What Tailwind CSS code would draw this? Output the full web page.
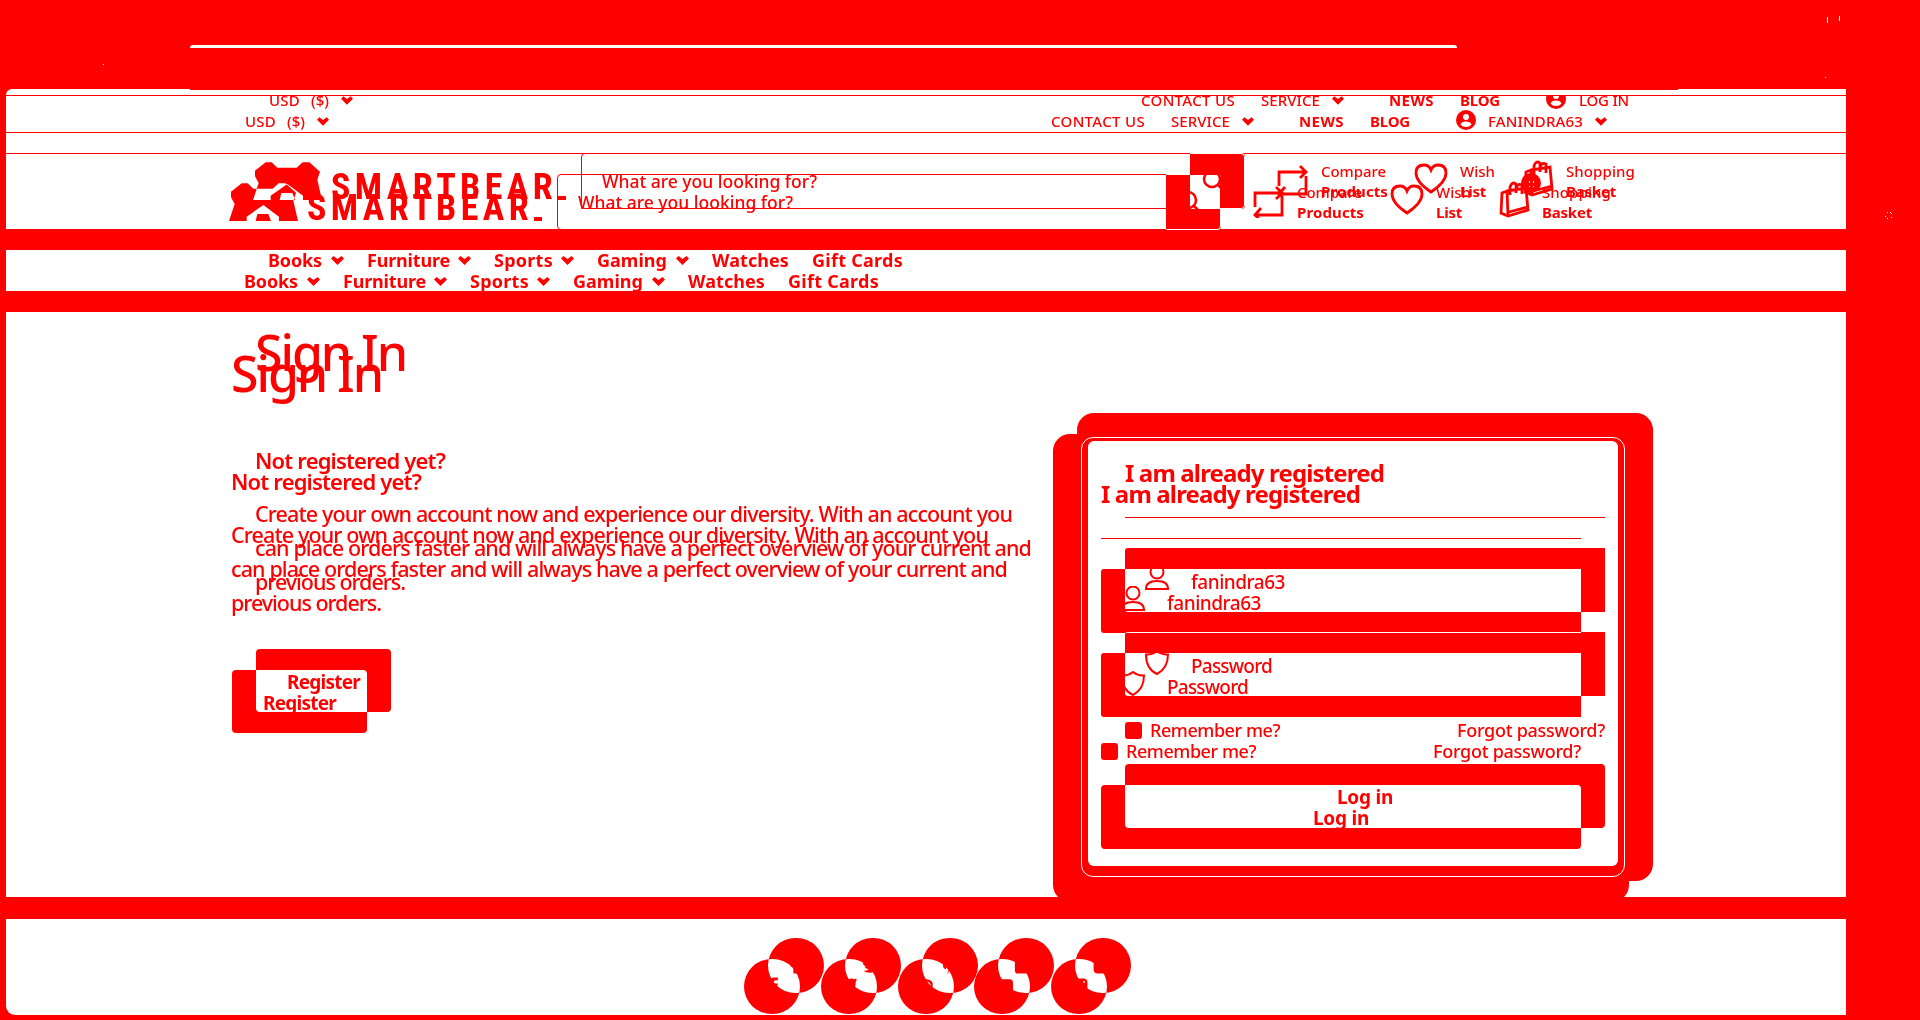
<!DOCTYPE html>
<html lang="en">
<head>
<meta charset="utf-8">
<title>SmartBear - Sign In</title>
<script src="https://cdn.jsdelivr.net/npm/@tailwindcss/browser@4"></script>
</head>
<body class="bg-[#f00]">
<div class="relative isolate h-[1020px] w-[1920px] overflow-hidden bg-[#f00] font-['Noto_Sans','Open_Sans',sans-serif] text-[#f00]">
  <!-- Window frame and page bands -->
  <div class="flex h-full flex-col">
    <div class="mt-[45px] ml-[190px] h-[3px] w-[1267px] rounded-t-[3px] bg-white"></div>
    <div class="mt-[41px] ml-[6px] h-[6px] w-[1840px] rounded-tl-[6px] bg-white"><div class="ml-[184px] h-px w-[1488px] bg-[#f00]"></div></div>
    <div class="mt-px ml-[6px] h-[36px] w-[1840px] bg-white"></div>
    <div class="mt-px ml-[6px] h-[20px] w-[1840px] bg-white"></div>
    <div class="mt-px ml-[6px] h-[75px] w-[1840px] bg-white"></div>
    <div class="mt-[21px] ml-[6px] h-[41px] w-[1840px] bg-white"></div>
    <div class="mt-[21px] ml-[6px] h-[585px] w-[1840px] bg-white"></div>
    <div class="mt-[22px] ml-[6px] h-[96px] w-[1840px] rounded-bl-[9px] bg-white"></div>
  </div>
  <!-- Specks in the title bar and scrollbar -->
  <svg class="absolute inset-0" width="1920" height="1020" fill="#fff"><path d="M103 64h1v1h-1zM1827 17h1v6h-1zM1839 16h1v5h-1zM1825 77h1v1h-1z"/><path d="M1887 212h1v1h-1zM1890 212h1v1h-1zM1885 216h1v1h-1zM1887 218h1v1h-1zM1891 213h1v1h-1zM1891 217h1v1h-1z"/></svg>
  <!-- Login card -->
  <div class="absolute top-[434px] left-[1053px] h-[468px] w-[576px] rounded-[17px] bg-[#f00]"></div>
  <div class="absolute top-[413px] left-[1077px] h-[468px] w-[576px] rounded-[17px] bg-[#f00]"></div>
  <div class="absolute top-[437px] left-[1081px] h-[440px] w-[544px] rounded-[12px] border border-white"></div>
  <div class="absolute top-[441px] left-[1088px] h-[425px] w-[530px] rounded-[6px] bg-white"></div>

  <div class="absolute top-[96px] left-0 h-[924px] w-[1920px] overflow-hidden"><div id="first" class="w-[1920px]"></div></div>
  <div class="absolute top-[96px] left-0 h-[924px] w-[1920px] overflow-hidden"><div id="second" class="-mt-[21px] ml-[24px] w-[1920px]"></div></div>
</div>

<script>
const t = (s, w, c = '') => `<span class="relative z-10 block shrink-0 whitespace-nowrap ${c}" data-w="${w}" style="width:${w}px">${s}</span>`;
const fill = c => `<span class="absolute inset-0 bg-[#0ff] mix-blend-difference ${c}"></span>`;
const chev = (c, s = 13) => `<svg class="relative z-10 shrink-0 ${c}" width="${s}" height="9" viewBox="0 0 13 9" fill="#f00"><path d="M0 2.5 2.5 0 6.5 3 10.5 0 13 2.5 6.5 9z"/></svg>`;
const glyphs = [
  '<path d="M30 37V29h4l1-5h-5v-2q0-2 3-2h2v-3h-4q-6 0-6 5v2h-3v5h3v8z"/>',
  '<path d="M17 34q4 0 6-2-4-1-5-3h2q-4-2-4-5l2 1q-3-3-1-6 4 4 9 4 0-5 5-5 2 0 3 1l3-1-1 2 2-1-2 3q0 14-12 14-4 0-7-2z"/>',
  '<path d="M25 37 27 29q-2-5 1-5 3 0 1 6 0 2 3 1 3-3 1-7-2-3-6-2-5 1-4 6l1 2-1 2q-4-2-3-6 2-7 9-7 8 1 7 7-1 7-7 7l-2-1-1 5z"/>',
  '<rect x="15" y="19" width="26" height="18" rx="4"/>',
  '<path fill-rule="evenodd" d="M22 18h11q5 0 5 5v9q0 5-5 5H22q-5 0-5-5v-9q0-5 5-5zm12 3a1 1 0 1 0 .1 0z"/>'
];
function page(login) {
  return `
  <div class="flex h-[50px] items-center text-[15px] leading-5 font-medium">
    ${t('USD', 31, 'ml-[245px]')}${t('($)', 18, 'ml-[11px]')}${chev('ml-[12px]', 12)}
    ${t('CONTACT US', 94, login ? 'ml-[788px]' : 'ml-[722px]')}${t('SERVICE', 59, 'ml-[26px]')}${chev('ml-[12px]', 12)}
    ${t('NEWS', 45, 'ml-[45px] font-bold')}${t('BLOG', 40, 'ml-[26px] font-bold')}
    <svg class="relative z-10 ml-[46px] -mt-0.5 shrink-0" width="20" height="20" viewBox="0 0 20 20"><circle cx="10" cy="10" r="10" fill="#f00"/><circle cx="10" cy="7" r="3" fill="#fff"/><path d="M4.5 14.5q1-3 5.500-3t5.500 3q-2 2.500-5.500 2.500t-5.500-2.500z" fill="#fff"/></svg>
    ${login ? t('LOG IN', 50, 'ml-[13px]') : t('FANINDRA63', 95, 'ml-[12px]') + chev('ml-[12px]', 12)}
  </div>
  <div class="mt-[28px] flex h-[55px] items-center">
    <svg class="ml-[229px] shrink-0 mix-blend-difference" width="70" height="38" viewBox="87 309 210 114" fill="#0ff"><path d="M87 423 104 372 93 352V335L125 310H143L160 326H218L236 310H256L288 338 280 362 294 423H237V410L190 375 140 410V423zM167 423 172 402H205L213 423z"/></svg>
    ${t('SMARTBEAR', 226, "ml-[8px] mt-[13px] text-[36px] leading-[40px] font-bold font-['Roboto'] font-stretch-condensed")}
    <span class="relative z-10 mt-[35px] ml-px h-[4px] w-[8px] bg-[#f00]"></span>
    <div class="relative ml-[15px] flex h-[56px] w-[664px] shrink-0 items-center self-start rounded-[4px] border border-[#f00]">
      ${t('What are you looking for?', 215, 'ml-[20px] mt-px text-[17.5px] font-medium')}
      <div class="relative -mr-px ml-auto h-[56px] w-[55px]">${fill('rounded-r-[4px]')}
        <svg class="absolute inset-0 z-10" width="55" height="55" fill="none" stroke="#f00" stroke-width="2.500"><circle cx="22" cy="26" r="8"/><path d="m28 32 7 7"/></svg>
      </div>
    </div>
    <svg class="relative z-10 ml-[32px] shrink-0" width="32" height="32" fill="none" stroke="#f00" stroke-width="2.800"><path d="M2 21V7H28M23 1l6 6-6 6M29 11v18H3M8 22 2 29l6 6"/></svg>
    <div class="ml-[12px] w-[67px] text-[15px] leading-5 font-medium">${t('Compare', 65)}${t('Products', 67, 'font-bold')}</div>
    <svg class="relative z-10 ml-[26px] -mt-1 shrink-0" width="34" height="31" fill="none" stroke="#f00" stroke-width="2.800"><path d="M17 29Q2 19 2 10 2 2 10 2 15 2 17 7 19 2 24 2 32 2 32 10 32 19 17 29z"/></svg>
    <div class="ml-[12px] w-[35px] text-[15px] leading-5 font-medium">${t('Wish', 35)}${t('List', 26, 'font-bold')}</div>
    <div class="relative z-10 ml-[29px] w-[30px] shrink-0"><svg class="-mt-1 overflow-visible" width="30" height="37" fill="none" stroke="#f00" stroke-width="2.800"><path d="M7 10 26 7 28 29 8 35 1 32 2 12zM7 10 8 35M10 14V6q2-6 6-3v9M16 8q1-6 6-4v9M9 31 28 26"/></svg>
      ${login ? '' : '<svg class="absolute -top-3 left-[21px]" width="20" height="20"><circle cx="10" cy="10" r="10" fill="#f00"/><path d="M8 8h1v2H8zM12 8h1v2h-1zM8 13h1v1H8zM12 13h1v1h-1z" fill="#fff"/></svg>'}</div>
    <div class="ml-[12px] w-[69px] text-[15px] leading-5 font-medium">${t('Shopping', 69)}${t('Basket', 50, 'font-bold')}</div>
  </div>
  <div class="mt-[32px] flex h-[41px] items-center text-[18px] font-bold">
    ${t('Books', 54, 'ml-[244px]')}${chev('ml-[9px]')}
    ${t('Furniture', 83, 'ml-[23px]')}${chev('ml-[8px]')}
    ${t('Sports', 59, 'ml-[23px]')}${chev('ml-[8px]')}
    ${t('Gaming', 70, 'ml-[23px]')}${chev('ml-[9px]')}
    ${t('Watches', 77, 'ml-[23px]')}${t('Gift Cards', 91, 'ml-[23px]')}
  </div>
  <div class="flex h-[657px]">
    <div class="ml-[231px] w-[870px] shrink-0 pt-[41px]">
      <h1 class="text-[50px] leading-[60px] font-medium">${t('Sign In', 151)}</h1>
      <h2 class="mt-[63px] text-[22px] leading-[30px] font-semibold">${t('Not registered yet?', 190)}</h2>
      <div class="mt-[22px] text-[21.5px] leading-[34px] font-medium">
        ${t('Create your own account now and experience our diversity. With an account you', 757)}
        ${t('can place orders faster and will always have a perfect overview of your current and', 776)}
        ${t('previous orders.', 150)}
      </div>
      <div class="relative mt-[50px] ml-px flex h-[63px] w-[135px] items-center justify-center pt-[3px] text-[19px] font-bold">${fill('rounded-[4px]')}${t('Register', 73)}</div>
    </div>
    <div class="w-[480px] shrink-0 pt-[177px]">
      <h2 class="text-[24px] leading-[30px] font-bold">${t('I am already registered', 259)}</h2>
      <div class="mt-[29px] h-px bg-[#f00]"></div>
      <div class="relative mt-[30px] flex h-[64px] items-center text-[19px] font-medium">${fill('rounded-l-[3px]')}
        <svg class="relative z-10 ml-[20px] -mt-1" width="24" height="26" fill="none" stroke="#f00" stroke-width="2"><circle cx="12" cy="7" r="6.500"/><path d="M1 24q0-8 11-8t11 8z"/></svg>
        ${t('fanindra63', 94, 'ml-[22px] mt-[5px]')}
      </div>
      <div class="relative mt-[20px] flex h-[64px] items-center text-[19px] font-medium">${fill('rounded-l-[3px]')}
        <svg class="relative z-10 ml-[20px] -mt-1" width="24" height="25" fill="none" stroke="#f00" stroke-width="2"><path d="M12 1Q7 5 1 4.500 1 19 12 24 23 18 23 4.500 17 5 12 1z"/></svg>
        ${t('Password', 81, 'ml-[22px] mt-[5px]')}
      </div>
      <div class="mt-[17px] flex h-[34px] items-center text-[18px] font-medium">
        <span class="h-[17px] w-[17px] rounded-[3px] bg-[#f00]"></span>
        ${t('Remember me?', 130, 'ml-[8px]')}${t('Forgot password?', 148, 'ml-auto')}
      </div>
      <div class="relative mt-[17px] flex h-[64px] items-center justify-center pt-[3px] text-[19px] font-bold">${fill('rounded-[4px]')}${t('Log in', 56)}</div>
    </div>
  </div>
  <div class="ml-[744px] flex gap-[20.8px]">
    ${glyphs.map(g => `<div class="relative h-[55px] w-[56px]">${fill('rounded-full')}<svg class="absolute inset-0 z-10 scale-85" width="55" height="55" fill="#f00">${g}</svg></div>`).join('')}
  </div>`;
}
document.getElementById('first').innerHTML = page(false);
document.getElementById('second').innerHTML = page(true);
// Spread each label's letters over its given width, once styles and fonts are in.
function fit() {
  document.querySelectorAll('[data-w]').forEach(e => {
    e.style.letterSpacing = '0px';
    const r = document.createRange();
    r.selectNodeContents(e);
    e.style.letterSpacing = (e.dataset.w - r.getBoundingClientRect().width) / e.textContent.length + 'px';
  });
}
fit();
window.addEventListener('load', fit);
document.fonts.ready.then(fit);
requestAnimationFrame(() => requestAnimationFrame(fit));
</script>
</body>
</html>
